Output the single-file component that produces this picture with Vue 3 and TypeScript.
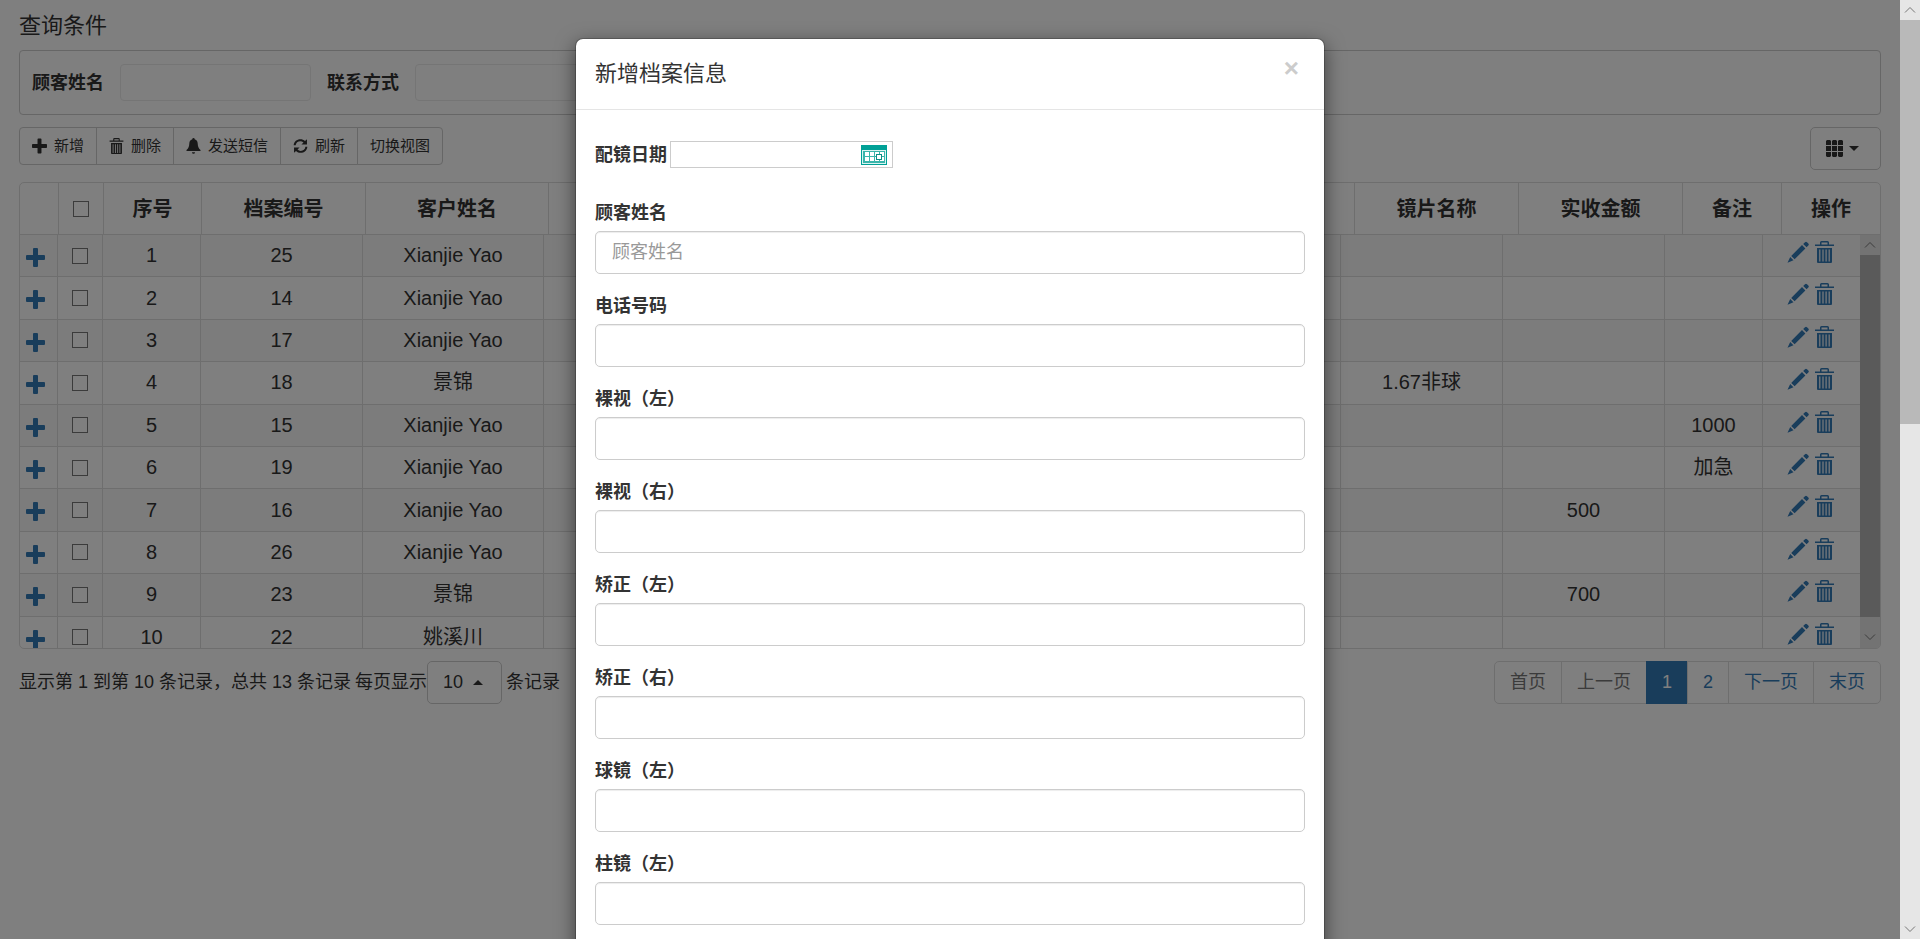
<script setup lang="ts">
import { reactive, ref } from 'vue'

interface RecordRow {
  index: number
  fileNo: number
  name: string
  lens?: string
  paid?: string
  remark?: string
}

interface ToolButton {
  label: string
  icon?: keyof typeof icons
}

const icons = {
  plus: {
    box: '0 0 19 19',
    path: 'M8 0h3q1 0 1 1v6h6q1 0 1 1v3q0 1-1 1h-6v6q0 1-1 1H8q-1 0-1-1v-6H1q-1 0-1-1V8q0-1 1-1h6V1q0-1 1-1z',
  },
  trash: {
    box: '0 0 19 22',
    path: 'M5 3.6V1.5Q5 0 6.500 0h6Q14 0 14 1.500V3.600h5V5H0V3.600zM6.500 3.600h6V1.600h-6zM2 7h15v14q0 1-1 1H3q-1 0-1-1zM4.200 8.500v12h1.200v-12zM7.400 8.500v12h1.200v-12zM10.500 8.500v12h1.200v-12zM13.600 8.500v12h1.200v-12z',
  },
  pencil: {
    box: '0 0 22 22',
    path: 'M18 1.200q1-1 2 0l1.300 1.400q1 1 0 2L19.600 6.300 16.200 2.900zM15 4.100l3.400 3.400L7.600 18.300 4.200 14.900zM3.200 16l3.300 3.300L0.500 21.700z',
  },
  bell: {
    box: '0 0 14 16',
    path: 'M7 0q1.200 0 1.200 1.300c2 .6 2.900 2.200 3 4.200.2 3.200.8 4.800 2.800 6.500v1H0v-1c2-1.700 2.600-3.300 2.800-6.500.1-2 1-3.600 3-4.200Q5.800 0 7 0zM5.400 14.200h3.200Q8.400 15.700 7 15.700t-1.600-1.500z',
  },
  refresh: {
    box: '0 0 16 16',
    path: 'M0.700 7.200C1 3 4.200.700 7.800.700c2 0 3.700.700 5 2L14.900.700V6.500H9l2.200-2.200C10.200 3.300 9 2.800 7.800 2.800 5.200 2.800 3 4.500 2.800 7.200zM15.300 8.800c-.3 4.200-3.500 6.500-7.100 6.500-2 0-3.700-.7-5-2L1.100 15.300V9.500H7l-2.200 2.200c1 1 2.200 1.500 3.400 1.500 2.600 0 4.800-1.700 5-4.400z',
  },
  grid: {
    box: '0 0 17 17',
    path: 'M1 0h3l1 1v4H0V1zM7 0h3l1 1v4H6V1zM13 0h3l1 1v4h-5V1zM0 6h5v5H0zM6 6h5v5H6zM12 6h5v5h-5zM0 12h5v4l-1 1H1l-1-1zM6 12h5v4l-1 1H7l-1-1zM12 12h5v4l-1 1h-3l-1-1z',
  },
}

const tools: ToolButton[] = [
  { label: '新增', icon: 'plus' },
  { label: '删除', icon: 'trash' },
  { label: '发送短信', icon: 'bell' },
  { label: '刷新', icon: 'refresh' },
  { label: '切换视图' },
]

const rows: RecordRow[] = [
  { index: 1, fileNo: 25, name: 'Xianjie Yao' },
  { index: 2, fileNo: 14, name: 'Xianjie Yao' },
  { index: 3, fileNo: 17, name: 'Xianjie Yao' },
  { index: 4, fileNo: 18, name: '景锦', lens: '1.67非球' },
  { index: 5, fileNo: 15, name: 'Xianjie Yao', remark: '1000' },
  { index: 6, fileNo: 19, name: 'Xianjie Yao', remark: '加急' },
  { index: 7, fileNo: 16, name: 'Xianjie Yao', paid: '500' },
  { index: 8, fileNo: 26, name: 'Xianjie Yao' },
  { index: 9, fileNo: 23, name: '景锦', paid: '700' },
  { index: 10, fileNo: 22, name: '姚溪川' },
]

const pages = [
  { label: '首页', state: 'disabled' },
  { label: '上一页', state: 'disabled' },
  { label: '1', state: 'active' },
  { label: '2', state: '' },
  { label: '下一页', state: '' },
  { label: '末页', state: '' },
]

const fields = reactive([
  { id: 'customer', label: '顾客姓名', placeholder: '顾客姓名', value: '' },
  { id: 'phone', label: '电话号码', placeholder: '', value: '' },
  { id: 'naked-left', label: '裸视（左）', placeholder: '', value: '' },
  { id: 'naked-right', label: '裸视（右）', placeholder: '', value: '' },
  { id: 'corrected-left', label: '矫正（左）', placeholder: '', value: '' },
  { id: 'corrected-right', label: '矫正（右）', placeholder: '', value: '' },
  { id: 'sphere-left', label: '球镜（左）', placeholder: '', value: '' },
  { id: 'cylinder-left', label: '柱镜（左）', placeholder: '', value: '' },
])

const searchName = ref('')
const searchPhone = ref('')
const fitDate = ref('')
const modalOpen = ref(true)
</script>

<template>
  <div class="window">
    <div class="viewport">
      <main class="page">
        <h1 class="page-title">查询条件</h1>
        <form class="search" @submit.prevent>
          <label for="search-name">顾客姓名</label>
          <input id="search-name" v-model="searchName" type="text">
          <label for="search-phone">联系方式</label>
          <input id="search-phone" v-model="searchPhone" type="text">
        </form>

        <div class="toolbar">
          <div class="tool-group">
            <button v-for="tool in tools" :key="tool.label" type="button" class="tool">
              <svg v-if="tool.icon" class="tool-icon" :viewBox="icons[tool.icon].box">
                <path fill-rule="evenodd" :d="icons[tool.icon].path" />
              </svg>
              {{ tool.label }}
            </button>
          </div>
          <button type="button" class="columns" aria-label="列">
            <svg class="grid-icon" :viewBox="icons.grid.box"><path :d="icons.grid.path" /></svg>
            <span class="caret down"></span>
          </button>
        </div>

        <section class="grid-box">
          <table class="head-table">
            <colgroup>
              <col class="h-expand"><col class="h-check"><col class="h-index"><col class="h-file"><col class="h-name">
              <col>
              <col class="h-lens"><col class="h-lens"><col class="h-remark"><col class="h-action">
            </colgroup>
            <thead>
              <tr>
                <th></th>
                <th><input type="checkbox" class="tick" aria-label="全选"></th>
                <th>序号</th>
                <th>档案编号</th>
                <th>客户姓名</th>
                <th></th>
                <th>镜片名称</th>
                <th>实收金额</th>
                <th>备注</th>
                <th>操作</th>
              </tr>
            </thead>
          </table>
          <div class="body-wrap">
            <table class="body-table">
              <colgroup>
                <col class="b-expand"><col class="b-check"><col class="b-index"><col class="b-file"><col class="b-name">
                <col>
                <col class="b-lens"><col class="b-lens"><col class="b-remark"><col class="b-action">
              </colgroup>
              <tbody>
                <tr v-for="row in rows" :key="row.index">
                  <td class="expand">
                    <a href="#" aria-label="展开">
                      <svg class="plus-icon" :viewBox="icons.plus.box"><path :d="icons.plus.path" /></svg>
                    </a>
                  </td>
                  <td><input type="checkbox" class="tick" :aria-label="`选择 ${row.index}`"></td>
                  <td>{{ row.index }}</td>
                  <td>{{ row.fileNo }}</td>
                  <td>{{ row.name }}</td>
                  <td></td>
                  <td>{{ row.lens }}</td>
                  <td>{{ row.paid }}</td>
                  <td>{{ row.remark }}</td>
                  <td class="actions">
                    <div class="action-links">
                      <a href="#" aria-label="编辑">
                        <svg class="pencil-icon" :viewBox="icons.pencil.box"><path :d="icons.pencil.path" /></svg>
                      </a>
                      <a href="#" aria-label="删除">
                        <svg class="trash-icon" :viewBox="icons.trash.box"><path fill-rule="evenodd" :d="icons.trash.path" /></svg>
                      </a>
                    </div>
                  </td>
                </tr>
              </tbody>
            </table>
            <div class="scroll inner-scroll">
              <svg class="chevron" viewBox="0 0 20 20"><path d="M5 12.500l5-5 5 5" /></svg>
              <div class="thumb"></div>
              <svg class="chevron" viewBox="0 0 20 20"><path d="M5 7.500l5 5 5-5" /></svg>
            </div>
          </div>
        </section>

        <footer class="footer">
          <div class="summary">
            <span>显示第 1 到第 10 条记录，总共 13 条记录</span>
            <span>每页显示</span>
            <button type="button" class="page-size">10 <span class="caret up"></span></button>
            <span>条记录</span>
          </div>
          <nav class="pagination">
            <a v-for="page in pages" :key="page.label" href="#" :class="page.state">{{ page.label }}</a>
          </nav>
        </footer>
      </main>

      <div v-if="modalOpen" class="backdrop">
        <div class="modal" role="dialog" aria-labelledby="modal-title">
          <header class="modal-header">
            <h2 id="modal-title">新增档案信息</h2>
            <button type="button" class="close" aria-label="关闭" @click="modalOpen = false">×</button>
          </header>
          <form class="modal-body" @submit.prevent>
            <div class="date-row">
              <label for="fit-date">配镜日期</label>
              <div class="date-box">
                <input id="fit-date" v-model="fitDate" type="text">
                <svg class="calendar" viewBox="0 0 26 20">
                  <rect width="26" height="20" fill="#00a096" />
                  <rect x="1" y="5" width="24" height="14" fill="#d9f3f0" />
                  <rect x="2" y="6" width="22" height="12" fill="#3ab5ab" />
                  <path fill="#fff" d="M4 7h4v4H4zM9 7h4v4H9zM14 7h4v4h-4zM19 7h4v4h-4zM4 12h4v4H4zM9 12h4v4H9zM14 12h4v4h-4zM19 12h4v4h-4z" />
                  <rect x="15.500" y="9.500" width="5" height="5" fill="#fff" stroke="#0b8f86" />
                </svg>
              </div>
            </div>
            <div v-for="field in fields" :key="field.id" class="field">
              <label :for="field.id">{{ field.label }}</label>
              <input :id="field.id" v-model="field.value" type="text" :placeholder="field.placeholder">
            </div>
          </form>
        </div>
      </div>
    </div>

    <div class="scroll outer-scroll">
      <svg class="chevron" viewBox="0 0 20 20"><path d="M5 12.500l5-5 5 5" /></svg>
      <div class="thumb"></div>
      <svg class="chevron end" viewBox="0 0 20 20"><path d="M5 7.500l5 5 5-5" /></svg>
    </div>
  </div>
</template>

<style>
body {
  margin: 0;
  overflow: hidden;
}
</style>

<style scoped>
.window {
  display: flex;
  height: 100vh;
  color: #333;
  background: #fff;
  font: 18px/25px "Liberation Sans", Arial, "Noto Sans CJK SC", sans-serif;
}

.window *,
.window *::before {
  box-sizing: border-box;
}

button,
input {
  font: inherit;
  color: inherit;
}

svg {
  display: block;
  fill: currentColor;
}

a {
  color: #337ab7;
  text-decoration: none;
}

.viewport {
  position: relative;
  flex: 1;
  min-width: 0;
  overflow: hidden;
}

.page {
  padding: 10px 19px;
}

.page-title {
  margin: 0 0 8px;
  font-size: 22px;
  font-weight: 400;
  line-height: 32px;
}

.search {
  display: flex;
  align-items: center;
  height: 65px;
  padding: 0 12px;
  border: 1px solid #ccc;
  border-radius: 4px;
}

.search label {
  padding-top: 2px;
  font-weight: 700;
}

.search input {
  width: 191px;
  height: 37px;
  margin: 0 16px;
  padding: 0 12px;
  border: 1px solid #eaeaea;
  border-radius: 4px;
  background: #fff;
}

.toolbar {
  display: flex;
  justify-content: space-between;
  align-items: flex-start;
  margin: 12px 0;
}

.tool-group {
  display: flex;
}

.tool {
  display: flex;
  align-items: center;
  gap: 7px;
  height: 38px;
  margin: 0 0 0 -1px;
  padding: 0 12px;
  border: 1px solid #ccc;
  background: #fff;
  font-size: 15px;
  line-height: 22px;
}

.tool:first-child {
  margin-left: 0;
  border-radius: 4px 0 0 4px;
}

.tool:last-child {
  border-radius: 0 4px 4px 0;
}

.tool-icon {
  width: 15px;
  height: 16px;
}

.columns {
  display: flex;
  align-items: center;
  gap: 6px;
  height: 43px;
  padding: 0 21px 0 15px;
  border: 1px solid #ccc;
  border-radius: 5px;
  background: #fff;
}

.grid-icon {
  width: 17px;
  height: 17px;
}

.caret {
  display: inline-block;
  border: 5px solid transparent;
}

.caret.down {
  border-top-color: #333;
  border-bottom-width: 0;
}

.caret.up {
  border-bottom-color: #333;
  border-top-width: 0;
}

.grid-box {
  overflow: hidden;
  border: 1px solid #ddd;
  border-radius: 5px;
}

table {
  width: 100%;
  table-layout: fixed;
  border-collapse: separate;
  border-spacing: 0;
  font-size: 20px;
}

th,
td {
  padding: 0;
  border-right: 1px solid #ddd;
  border-bottom: 1px solid #ddd;
  text-align: center;
}

th:last-child,
td:last-child {
  border-right: 0;
}

th {
  height: 52px;
  padding-top: 1px;
}

.h-expand { width: 39px; }
.h-check { width: 45px; }
.h-index { width: 98px; }
.h-file { width: 164px; }
.h-name { width: 183px; }
.h-lens { width: 164px; }
.h-remark { width: 99px; }
.h-action { width: 98px; }

.b-expand { width: 38px; }
.b-check { width: 45px; }
.b-index { width: 98px; }
.b-file { width: 162px; }
.b-name { width: 181px; }
.b-lens { width: 162px; }
.b-remark { width: 98px; }
.b-action { width: 97px; }

.body-wrap {
  display: flex;
  align-items: flex-start;
  height: 413px;
  overflow: hidden;
}

.body-table {
  flex: 1;
  min-width: 0;
  height: 424px;
}

.body-table tr:nth-child(odd) {
  background: #f9f9f9;
}

td.expand {
  padding: 13px 0 0 6px;
  vertical-align: top;
}

td.actions {
  padding: 6px 2px 0 0;
  vertical-align: top;
}

.action-links {
  display: flex;
  justify-content: center;
  gap: 6px;
}

.plus-icon {
  width: 19px;
  height: 19px;
}

.pencil-icon {
  width: 22px;
  height: 22px;
}

.trash-icon {
  width: 19px;
  height: 22px;
}

.tick {
  display: block;
  width: 16px;
  height: 16px;
  margin: 0 auto;
  border: 1px solid #767676;
  background: #fff;
  appearance: none;
}

.scroll {
  display: flex;
  flex: none;
  flex-direction: column;
  width: 20px;
  height: 100%;
}

.chevron {
  flex: none;
  width: 20px;
  height: 20px;
  fill: none;
  stroke: #777;
  stroke-width: 1;
}

.inner-scroll {
  background: #e6e6e6;
}

.inner-scroll .thumb {
  height: 362px;
  margin-bottom: 10px;
  background: #b4b4b4;
}

.outer-scroll {
  background: #e6e6e6;
}

.outer-scroll .thumb {
  height: 43%;
  background: #b9b9b9;
}

.outer-scroll .end {
  margin-top: auto;
}

.footer {
  display: flex;
  justify-content: space-between;
  align-items: flex-start;
  margin-top: 12px;
}

.summary {
  display: flex;
  align-items: center;
  gap: 4px;
}

.summary span:nth-child(2) {
  margin-right: -4px;
}

.page-size {
  display: flex;
  align-items: center;
  gap: 10px;
  height: 43px;
  padding: 0 18px 0 15px;
  border: 1px solid #ccc;
  border-radius: 5px;
  background: #fff;
}

.pagination {
  display: flex;
}

.pagination a {
  margin-left: -1px;
  padding: 8px 15px;
  border: 1px solid #ddd;
  background: #fff;
}

.pagination a:first-child {
  border-radius: 5px 0 0 5px;
}

.pagination a:last-child {
  border-radius: 0 5px 5px 0;
}

.pagination .disabled {
  color: #777;
}

.pagination .active {
  border-color: #337ab7;
  background: #337ab7;
  color: #fff;
}

.backdrop {
  position: absolute;
  inset: 0;
  overflow: hidden;
  background: rgba(0, 0, 0, 0.5);
}

.modal {
  width: 750px;
  margin: 38px auto;
  border: 1px solid rgba(0, 0, 0, 0.2);
  border-radius: 8px;
  background: #fff;
  background-clip: padding-box;
  box-shadow: 0 6px 19px rgba(0, 0, 0, 0.5);
}

.modal-header {
  display: flex;
  justify-content: space-between;
  align-items: flex-start;
  padding: 19px;
  border-bottom: 1px solid #e5e5e5;
}

.modal-header h2 {
  margin: 0;
  font-size: 22px;
  font-weight: 400;
  line-height: 32px;
}

.close {
  padding: 0 6px;
  border: 0;
  background: none;
  color: #ccc;
  font-size: 26px;
  font-weight: 700;
  line-height: 20px;
}

.modal-body {
  padding: 31px 19px;
}

.modal-body label {
  font-weight: 700;
}

.date-row {
  display: flex;
  align-items: flex-end;
  gap: 3px;
  margin-bottom: 33px;
}

.date-box {
  display: flex;
  align-items: center;
  width: 223px;
  height: 27px;
  padding-right: 5px;
  border: 1px solid #ccc;
  background: #fff;
}

.date-box input {
  flex: 1;
  min-width: 0;
  height: 24px;
  padding: 0 4px;
  border: 0;
  outline: 0;
  background: none;
}

.calendar {
  width: 26px;
  height: 20px;
}

.field {
  margin-bottom: 20px;
}

.field label {
  display: block;
  margin-bottom: 5px;
}

.field input {
  display: block;
  width: 100%;
  height: 43px;
  padding: 6px 16px;
  border: 1px solid #ccc;
  border-radius: 5px;
  background: #fff;
  box-shadow: inset 0 1px 1px rgba(0, 0, 0, 0.075);
}

.field input::placeholder {
  color: #999;
  opacity: 1;
}
</style>
